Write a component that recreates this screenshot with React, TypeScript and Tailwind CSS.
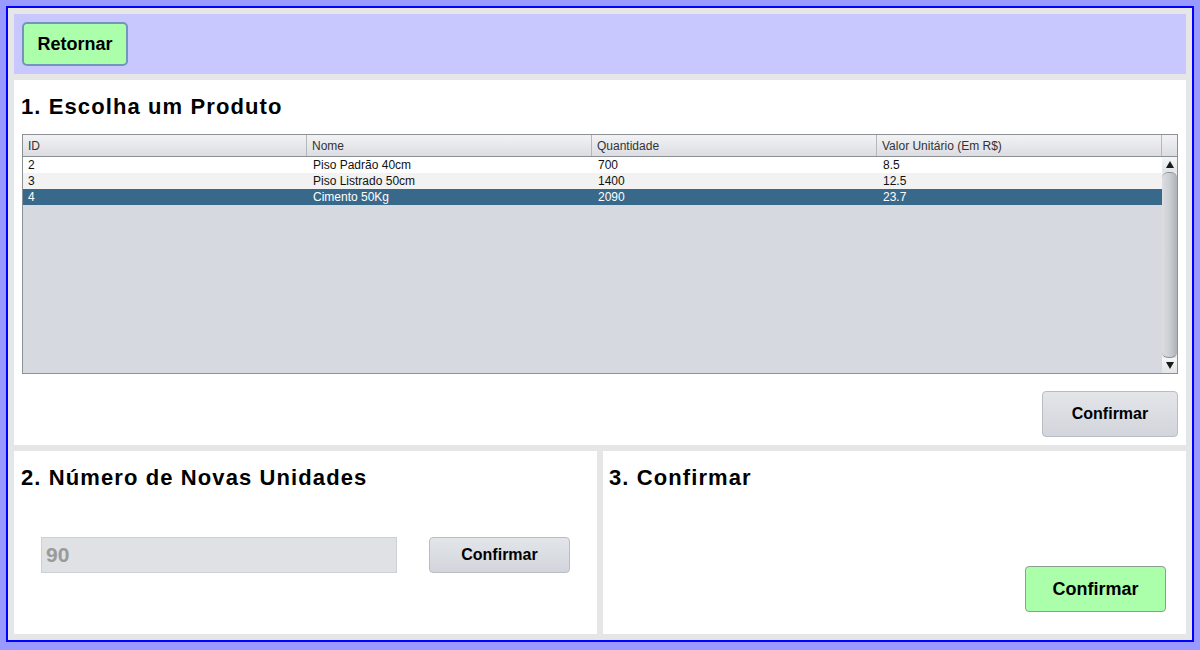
import React from 'react'

const rows = [
  { id: '2', nome: 'Piso Padrão 40cm', qtd: '700', valor: '8.5' },
  { id: '3', nome: 'Piso Listrado 50cm', qtd: '1400', valor: '12.5' },
  { id: '4', nome: 'Cimento 50Kg', qtd: '2090', valor: '23.7' },
]

const font = { fontFamily: '"Liberation Sans", Arial, sans-serif' }

function Title({ children }: { children: React.ReactNode }) {
  return (
    <h2 className="h-[26px] text-[22px] leading-[26px] font-bold tracking-[1.1px] text-black">
      {children}
    </h2>
  )
}

function GrayButton({ className = '' }: { className?: string }) {
  return (
    <button
      className={`rounded-[4px] border border-[#b9bdc3] bg-gradient-to-b from-[#e3e5e9] to-[#d2d5db] text-[16px] font-bold text-black ${className}`}
    >
      Confirmar
    </button>
  )
}

function ScrollBar() {
  return (
    <div className="flex w-[15px] flex-col bg-[#e9eaed]">
      <div className="flex h-[15px] items-center justify-center bg-gradient-to-b from-[#f5f6f7] to-[#e2e4e7]">
        <svg width="8" height="7" viewBox="0 0 8 7">
          <path d="M4 0 L8 7 L0 7 Z" fill="#1a1a1a" />
        </svg>
      </div>
      <div className="flex-1 rounded-t-[6px] rounded-b-[6px] border-y border-[#8e9297] bg-gradient-to-r from-[#dcdee1] via-[#cbced2] to-[#aeb2b7]" />
      <div className="flex h-[15px] items-center justify-center bg-gradient-to-b from-[#f5f6f7] to-[#e2e4e7]">
        <svg width="8" height="7" viewBox="0 0 8 7">
          <path d="M0 0 L8 0 L4 7 Z" fill="#1a1a1a" />
        </svg>
      </div>
    </div>
  )
}

function ProductTable() {
  const cols = ['ID', 'Nome', 'Quantidade', 'Valor Unitário (Em R$)']
  return (
    <div className="mt-[14px] flex h-[240px] flex-col border border-[#8c9196] bg-[#d6d9df]">
      {/* header */}
      <div className="flex h-[22px] border-b border-[#8c9196] bg-gradient-to-b from-[#f3f3f5] to-[#dcdde2] text-[12px] text-[#333]">
        <div className="w-[284px] border-r border-[#b4b7bc] pl-[5px] leading-[22px]">{cols[0]}</div>
        <div className="w-[285px] border-r border-[#b4b7bc] pl-[5px] leading-[22px]">{cols[1]}</div>
        <div className="w-[285px] border-r border-[#b4b7bc] pl-[5px] leading-[22px]">{cols[2]}</div>
        <div className="w-[285px] border-r border-[#b4b7bc] pl-[5px] leading-[22px]">{cols[3]}</div>
        <div className="flex-1" />
      </div>
      {/* body */}
      <div className="flex flex-1">
        <div className="flex-1">
          {rows.map((r, i) => {
            const bg = i === 2 ? 'bg-[#39698a] text-white' : i === 1 ? 'bg-[#f2f2f2] text-[#111]' : 'bg-white text-[#111]'
            return (
              <div key={r.id} className={`flex h-[16px] text-[12px] leading-[16px] ${bg}`}>
                <div className="w-[284px] pl-[5px]">{r.id}</div>
                <div className="w-[285px] pl-[6px]">{r.nome}</div>
                <div className="w-[285px] pl-[6px]">{r.qtd}</div>
                <div className="flex-1 pl-[6px]">{r.valor}</div>
              </div>
            )
          })}
        </div>
        <ScrollBar />
      </div>
    </div>
  )
}

export default function App() {
  return (
    <div className="h-[650px] w-[1200px] bg-[#9999ff] px-[6px] pt-[6px] pb-[8px]" style={font}>
      <div className="flex h-full flex-col gap-[6px] border-2 border-[#0000ff] bg-[#e6e6e6] p-[6px]">
        {/* top bar */}
        <div className="flex h-[60px] items-center bg-[#c8c8ff] px-[8px]">
          <button className="h-[44px] w-[106px] rounded-[5px] border-2 border-[#7395bb] bg-[#abffab] text-[18px] font-bold text-black">
            Retornar
          </button>
        </div>

        {/* step 1 */}
        <div className="flex h-[365px] flex-col bg-white px-[8px] pt-[14px] pb-[8px]">
          <div className="-ml-[1px]">
            <Title>1. Escolha um Produto</Title>
          </div>
          <ProductTable />
          <div className="mt-[17px] flex justify-end">
            <GrayButton className="h-[46px] w-[136px]" />
          </div>
        </div>

        {/* steps 2 and 3 */}
        <div className="flex flex-1 gap-[6px]">
          <div className="flex flex-1 flex-col bg-white px-[7px] pt-[14px]">
            <Title>2. Número de Novas Unidades</Title>
            <div className="mt-[46px] flex gap-[32px] px-[20px]">
              <div className="flex h-[36px] w-[356px] items-center border border-[#cdd0d5] bg-[#dfe1e5] pl-[4px] text-[21px] font-bold text-[#9a9a9a]">
                90
              </div>
              <GrayButton className="h-[36px] w-[141px]" />
            </div>
          </div>
          <div className="flex flex-1 flex-col bg-white pt-[14px] pr-[20px] pb-[22px] pl-[6px]">
            <Title>3. Confirmar</Title>
            <div className="mt-auto flex justify-end">
              <button className="h-[46px] w-[141px] rounded-[4px] border border-[#8e9e8e] bg-[#abffab] text-[18px] font-bold text-black">
                Confirmar
              </button>
            </div>
          </div>
        </div>
      </div>
    </div>
  )
}
